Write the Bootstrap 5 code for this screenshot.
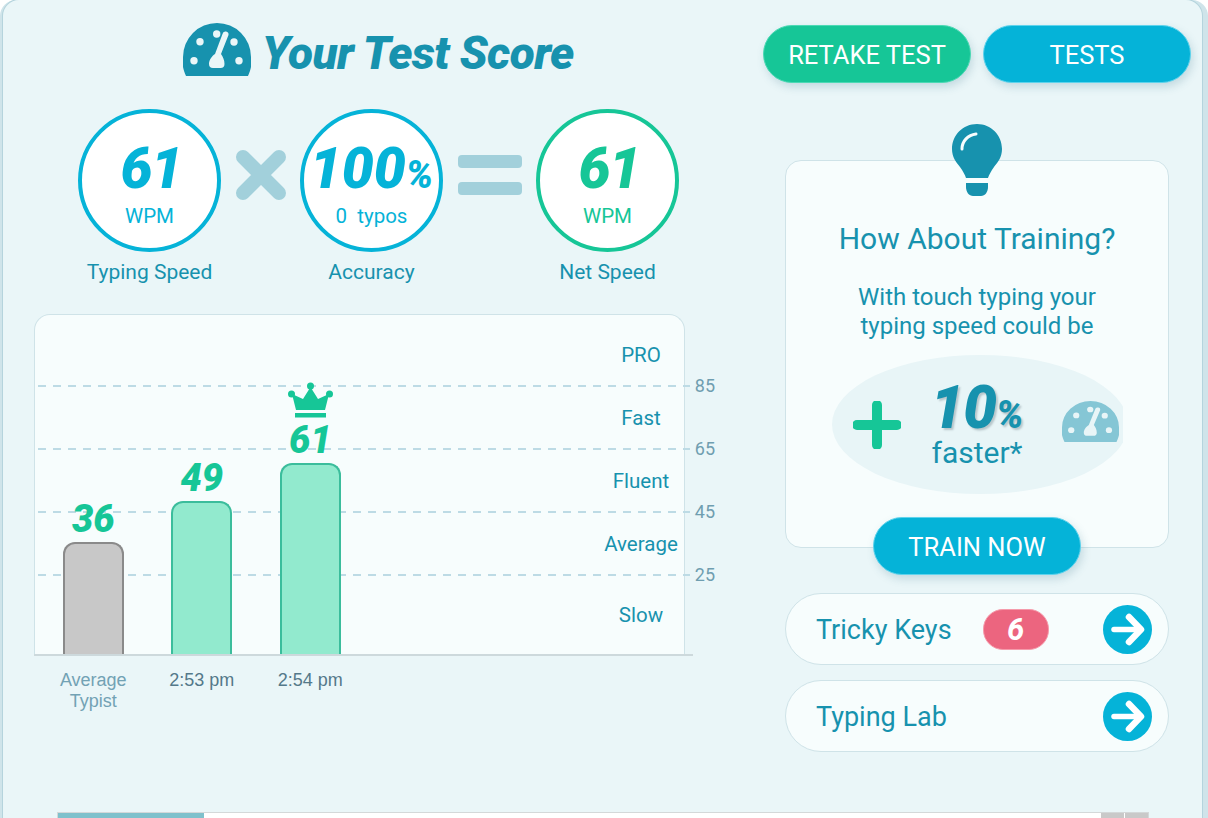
<!DOCTYPE html>
<html lang="en">
<head>
    <meta charset="UTF-8">
    <meta name="viewport" content="width=device-width, initial-scale=1.0">
    <title>Your Test Score</title>
    <link href="https://cdn.jsdelivr.net/npm/bootstrap@5.3.0/dist/css/bootstrap.min.css" rel="stylesheet">
    <style>
        html, body { height: 100%; overflow: hidden; }
        body { background: #fff; font-family: Roboto, sans-serif; color: #1792ae; }
        .shell { height: 818px; margin: 0 6px 0 3px; background: #eaf6f8; border-radius: 16px 16px 0 0; box-shadow: 0 0 0 1px #b5d4dd, 6px 0 0 #cfe4ea, -3px 0 0 #cfe4ea; position: relative; overflow: hidden; }
        .left-col { width: 760px; flex: none; padding-top: 21px; }
        .right-col { flex: 1; padding-top: 25px; }

        .score-title { height: 60px; padding-left: 180px; gap: 11px; }
        .score-title h1 { margin: 6px 0 0; font-size: 46px; font-weight: 900; font-style: italic; letter-spacing: -.6px; color: #1792ae; }
        .gauge-lg { width: 68px; height: 53px; margin-bottom: 4px; --dot: #eaf6f8; fill: #1792ae; }
        .gauge-sm { width: 57px; height: 41px; margin-bottom: 6px; --dot: #e8f5f7; fill: #85c6d5; }

        .stat-row { padding: 28px 0 0 75px; }
        .stat-item { width: 143px; text-align: center; font-size: 21px; line-height: 30px; }
        .stat-ring { width: 143px; height: 143px; border: 4px solid #05b3d8; border-radius: 50%; background: #fff; color: #05b3d8; margin-bottom: 5px; padding-top: 2px; line-height: 1; }
        .stat-ring.net { border-color: #16c697; color: #16c697; }
        .stat-num { font-size: 57px; font-weight: 900; font-style: italic; letter-spacing: -1.5px; margin: 4px 0 0 3px; }
        .stat-num.full-pct { letter-spacing: 0; margin-left: 0; }
        .stat-num small { font-size: 38px; letter-spacing: 0; }
        .stat-unit { font-size: 20.5px; margin-top: 9px; }
        .stat-op { width: 79px; height: 143px; flex: none; padding-bottom: 11px; }
        .stat-op.wide { width: 93px; }
        .stat-op svg { fill: #a2d0db; }

        .chart-box { width: 651px; height: 340px; margin: 27px 0 0 31px; background: #f7fdfd; border: 1px solid #cfe3e8; border-bottom: 0; border-radius: 16px 16px 0 0; position: relative; }
        .chart-band { height: 63px; margin: 0 -6px 0 3px; background: linear-gradient(to right, #bddbe5 8px, transparent 8px) left bottom / 15px 2px repeat-x; position: relative; font-size: 20.5px; }
        .chart-band.first { height: 72px; padding-bottom: 22px; }
        .chart-band.last { height: 78px; background: none; padding-bottom: 29px; }
        .band-name { width: 90px; margin-left: auto; margin-right: 4px; text-align: center; line-height: 1; padding-bottom: 22px; }
        .chart-band.first .band-name, .chart-band.last .band-name { padding-bottom: 0; }
        .band-tick { position: absolute; right: -25px; bottom: -9px; font-size: 18px; line-height: 20px; color: #6f9eb0; }
        .chart-bars { position: absolute; left: 4px; bottom: 0; }
        .bar-col { width: 108.5px; }
        .bar-val { font-size: 38px; font-weight: 900; font-style: italic; color: #16c697; line-height: 1; margin-bottom: 4px; }
        .bar-fill { width: 61px; background: #92eace; border: 2px solid #3bbd9c; border-bottom: 0; border-radius: 12px 12px 0 0; }
        .bar-fill.grey { background: #c8c8c8; border-color: #8a8a8a; }
        .bar-crown { margin-bottom: 3px; }
        .chart-axis { width: 659px; height: 2px; margin-left: 31px; background: #cdd9dc; }
        .axis-labels { margin-left: 36px; font-family: "Liberation Sans", Arial, sans-serif; font-size: 18px; line-height: 21px; padding-top: 14px; color: #54798a; }
        .axis-labels .muted-lbl { color: #72a2b4; }

        .pill-btn { width: 208px; height: 58px; border-radius: 29px; font-size: 25.5px; color: #fff; padding: 2px 0 0; box-shadow: 2px 4px 8px rgba(60, 120, 140, .22); }
        .pill-btn:hover { color: #fff; }
        .pill-green { background: #16c697; border: 1px solid #4cd9b4; }
        .pill-blue { background: #05b3d8; border: 1px solid #5fd3ec; }
        .top-btns { gap: 12px; }
        .train-area { width: 384px; margin: 77px 0 0 22px; position: relative; }
        .train-bulb { position: absolute; left: 166px; top: -36px; width: 52px; height: 72px; }
        .train-card { height: 388px; background: #f7fdfd; border: 1px solid #cfe3e8; border-radius: 16px; text-align: center; padding-top: 58px; }
        .train-card h2 { font-size: 30px; font-weight: 400; margin: 0 0 24px; line-height: 40px; }
        .train-card p { font-size: 24px; line-height: 29px; margin: 0 0 14px; }
        .boost-clip { width: 291px; height: 139px; margin-left: 46px; overflow: hidden; }
        .boost-oval { width: 296px; height: 139px; border-radius: 50%; background: #e8f5f7; padding-left: 21px; }
        .boost-plus { width: 48px; height: 48px; flex: none; }
        .boost-text { width: 104px; margin-left: 24px; margin-right: 33px; flex: none; }
        .boost-num { font-size: 60px; line-height: 51px; font-weight: 900; font-style: italic; letter-spacing: -1px; text-shadow: 2px 2px 2px rgba(70, 90, 100, .3); white-space: nowrap; }
        .boost-num small { font-size: 38px; letter-spacing: 0; }
        .boost-word { font-size: 30px; line-height: 30px; margin-top: -3px; }
        .train-btn-wrap { margin-top: -31px; position: relative; }
        .link-pill { width: 384px; height: 72px; margin: 0 0 15px 22px; background: #f7fdfd; border: 1px solid #cfe3e8; border-radius: 36px; padding: 0 16px 0 30px; font-size: 27px; color: #1792ae; text-decoration: none; }
        .pill-label { padding-top: 2px; }
        .first-pill { margin-top: 18px; }
        .tricky-count { width: 66px; height: 41px; margin-left: 31px; background: #ec657f; border: 1px solid #f59bab; border-radius: 20px; color: #fff; font-size: 31px; font-weight: 700; font-style: italic; line-height: 1; }
        .go-circle { width: 49px; height: 49px; margin-left: auto; }

        .ad-strip { position: absolute; left: 54px; top: 812px; width: 1092px; height: 10px; background: #fff; border: 1px solid #d4d8d9; }
        .ad-strip i { display: block; height: 100%; }
        .ad-teal { width: 146px; background: #7fc1cc; }
        .ad-grey { width: 23px; margin-left: 1px; background: #c9c9c9; }
    </style>
</head>
<body>
    <svg width="0" height="0" class="d-none">
        <symbol id="gauge" viewBox="0 0 68 53" preserveAspectRatio="none">
            <path d="M3 53C-1 44-1 38 0 34A34 34 0 0 1 68 34C69 38 69 44 65 53Z"/>
            <g style="fill: var(--dot)">
                <circle cx="33.7" cy="11" r="3.7"/>
                <circle cx="17" cy="18.7" r="3.7"/>
                <circle cx="51" cy="19" r="3.7"/>
                <circle cx="11" cy="37.7" r="3.7"/>
                <circle cx="56" cy="37.7" r="3.7"/>
                <path d="M39.5 11a3 3 0 0 1 6 1L38 31C40 34 41.5 37 41.5 41a4 4 0 0 1-4 4H30a4 4 0 0 1-4-4C26 37 29 33 32 31Z"/>
            </g>
        </symbol>
        <symbol id="go-arrow" viewBox="0 0 49 49">
            <circle cx="24.5" cy="24.5" r="24.5" fill="#05b3d8"/>
            <path d="M11 24.5H37" fill="none" stroke="#fff" stroke-width="5.5" stroke-linecap="round"/>
            <path d="M26 12L38 24.5L26 37" fill="none" stroke="#fff" stroke-width="6.5" stroke-linecap="round" stroke-linejoin="round"/>
        </symbol>
    </svg>

    <div class="shell d-flex">
        <div class="left-col">
            <div class="score-title d-flex align-items-center">
                <svg class="gauge-lg"><use href="#gauge"/></svg>
                <h1>Your Test Score</h1>
            </div>

            <div class="stat-row d-flex">
                <div class="stat-item">
                    <div class="stat-ring d-flex flex-column justify-content-center">
                        <div class="stat-num">61</div>
                        <div class="stat-unit">WPM</div>
                    </div>
                    Typing Speed
                </div>
                <div class="stat-op d-flex align-items-center justify-content-center">
                    <svg width="52" height="52" viewBox="0 0 52 52"><path d="M8 8L44 44M44 8L8 44" fill="none" stroke="#a2d0db" stroke-width="14" stroke-linecap="round"/></svg>
                </div>
                <div class="stat-item">
                    <div class="stat-ring d-flex flex-column justify-content-center">
                        <div class="stat-num full-pct">100<small>%</small></div>
                        <div class="stat-unit">0&nbsp; typos</div>
                    </div>
                    Accuracy
                </div>
                <div class="stat-op wide d-flex align-items-center justify-content-center">
                    <svg width="64" height="40" viewBox="0 0 64 40"><rect width="64" height="13" rx="4"/><rect y="27" width="64" height="13" rx="4"/></svg>
                </div>
                <div class="stat-item">
                    <div class="stat-ring net d-flex flex-column justify-content-center">
                        <div class="stat-num">61</div>
                        <div class="stat-unit">WPM</div>
                    </div>
                    Net Speed
                </div>
            </div>

            <div class="chart-box">
                <div class="chart-band first d-flex align-items-end"><div class="band-name">PRO</div><span class="band-tick">85</span></div>
                <div class="chart-band d-flex align-items-end"><div class="band-name">Fast</div><span class="band-tick">65</span></div>
                <div class="chart-band d-flex align-items-end"><div class="band-name">Fluent</div><span class="band-tick">45</span></div>
                <div class="chart-band d-flex align-items-end"><div class="band-name">Average</div><span class="band-tick">25</span></div>
                <div class="chart-band last d-flex align-items-end"><div class="band-name">Slow</div></div>
                <div class="chart-bars d-flex align-items-end">
                    <div class="bar-col d-flex flex-column align-items-center">
                        <div class="bar-val">36</div>
                        <div class="bar-fill grey" style="height: 112px"></div>
                    </div>
                    <div class="bar-col d-flex flex-column align-items-center">
                        <div class="bar-val">49</div>
                        <div class="bar-fill" style="height: 153px"></div>
                    </div>
                    <div class="bar-col d-flex flex-column align-items-center">
                        <svg class="bar-crown" width="45" height="36" viewBox="0 0 45 36" fill="#16c697"><circle cx="22.5" cy="4" r="3.5"/><circle cx="3.5" cy="12" r="3.5"/><circle cx="41.5" cy="12" r="3.5"/><path d="M22.5 5L30 17L41 12L37 28H8L4 12L15 17Z"/><rect x="7" y="31" width="31" height="4.5"/></svg>
                        <div class="bar-val">61</div>
                        <div class="bar-fill" style="height: 191px"></div>
                    </div>
                </div>
            </div>
            <div class="chart-axis"></div>
            <div class="axis-labels d-flex text-center">
                <div class="bar-col muted-lbl">Average<br>Typist</div>
                <div class="bar-col">2:53 pm</div>
                <div class="bar-col">2:54 pm</div>
            </div>
        </div>

        <div class="right-col">
            <div class="d-flex top-btns">
                <button class="btn pill-btn pill-green" type="button">RETAKE TEST</button>
                <button class="btn pill-btn pill-blue" type="button">TESTS</button>
            </div>

            <div class="train-area">
                <svg class="train-bulb" viewBox="0 0 52 72">
                    <path fill="#1792ae" d="M26 0C12 0 1 11 1 25C1 33 5 38 9 43C12 47 14 51 15 54H37C38 51 40 47 43 43C47 38 51 33 51 25C51 11 40 0 26 0Z"/>
                    <path fill="#1792ae" d="M15 59H37V63C37 68 34 72 30 72H22C18 72 15 68 15 63Z"/>
                    <path fill="none" stroke="#f7fdfd" stroke-width="3" stroke-linecap="round" d="M11 25C11 17 17 11 25 10"/>
                </svg>
                <div class="train-card">
                    <h2>How About Training?</h2>
                    <p>With touch typing your<br>typing speed could be</p>
                    <div class="boost-clip">
                        <div class="boost-oval d-flex align-items-center">
                            <svg class="boost-plus" viewBox="0 0 48 48"><path d="M24 4V44M4 24H44" stroke="#16c697" stroke-width="10" stroke-linecap="round"/></svg>
                            <div class="boost-text">
                                <div class="boost-num">10<small>%</small></div>
                                <div class="boost-word">faster*</div>
                            </div>
                            <svg class="gauge-sm"><use href="#gauge"/></svg>
                        </div>
                    </div>
                </div>
                <div class="train-btn-wrap text-center">
                    <button class="btn pill-btn pill-blue" type="button">TRAIN NOW</button>
                </div>
            </div>

            <a href="#" class="link-pill first-pill d-flex align-items-center">
                <span class="pill-label">Tricky Keys</span>
                <span class="tricky-count d-flex align-items-center justify-content-center">6</span>
                <svg class="go-circle"><use href="#go-arrow"/></svg>
            </a>
            <a href="#" class="link-pill d-flex align-items-center">
                <span class="pill-label">Typing Lab</span>
                <svg class="go-circle"><use href="#go-arrow"/></svg>
            </a>
        </div>

        <div class="ad-strip d-flex">
            <i class="ad-teal"></i>
            <i class="ms-auto ad-grey"></i>
            <i class="ad-grey"></i>
        </div>
    </div>

    <script src="https://cdn.jsdelivr.net/npm/bootstrap@5.3.0/dist/js/bootstrap.bundle.min.js"></script>
</body>
</html>
